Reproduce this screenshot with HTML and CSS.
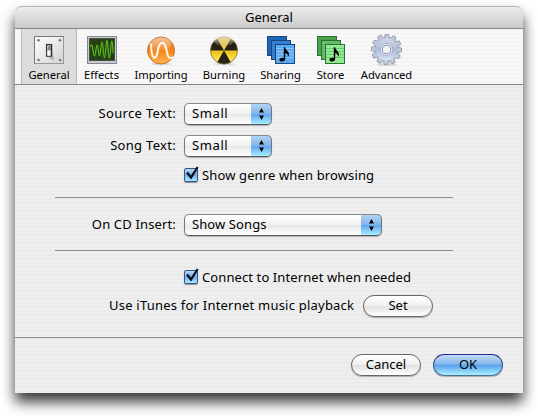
FILE: index.html
```
<!DOCTYPE html>
<html lang="en">
<head>
<meta charset="utf-8">
<title>General</title>
<link rel="stylesheet" href="styles.css">
</head>
<body>
<svg width="0" height="0" class="defs">
  <defs>
    <linearGradient id="plate" x1="0" y1="0" x2="1" y2="1"><stop offset="0" stop-color="#fff"/><stop offset="1" stop-color="#d2d2d2"/></linearGradient>
    <linearGradient id="orange" x1="0" y1="0" x2="0" y2="1"><stop offset="0" stop-color="#e87a20"/><stop offset=".5" stop-color="#f5861c"/><stop offset="1" stop-color="#ffb550"/></linearGradient>
    <linearGradient id="yellow" x1="0" y1="0" x2="0" y2="1"><stop offset="0" stop-color="#c99a10"/><stop offset=".4" stop-color="#f0d24e"/><stop offset=".55" stop-color="#ecc51a"/><stop offset="1" stop-color="#fff27c"/></linearGradient>
    <linearGradient id="gloss" x1="0" y1="0" x2="0" y2="1"><stop offset="0" stop-color="#fff" stop-opacity=".85"/><stop offset="1" stop-color="#fff" stop-opacity=".1"/></linearGradient>
    <linearGradient id="steel" x1="0" y1="0" x2="0" y2="1"><stop offset="0" stop-color="#d3dae7"/><stop offset=".5" stop-color="#adb9d8"/><stop offset="1" stop-color="#dae3f3"/></linearGradient>
    <path id="note" d="M18.800 24V13.200h1.300c.2 2.700 4 4.200 3.900 7.100 0 1.200-.6 2.200-1.300 3 .7-2.500-.4-3.500-2.500-4.200V24.800c0 1.700-1.500 2.700-3.200 2.700-1.500 0-2.600-.7-2.600-1.800 0-1.600 2.300-2.600 4.400-1.700z"/>
    <path id="tooth" d="M-2.600-11L-1.500-15h3L2.600-11z"/>
    <g id="teeth">
      <use href="#tooth"/><use href="#tooth" transform="rotate(30)"/><use href="#tooth" transform="rotate(60)"/><use href="#tooth" transform="rotate(90)"/>
      <use href="#tooth" transform="rotate(120)"/><use href="#tooth" transform="rotate(150)"/><use href="#tooth" transform="rotate(180)"/><use href="#tooth" transform="rotate(210)"/>
      <use href="#tooth" transform="rotate(240)"/><use href="#tooth" transform="rotate(270)"/><use href="#tooth" transform="rotate(300)"/><use href="#tooth" transform="rotate(330)"/>
    </g>
  </defs>
</svg>
<main class="window">
  <header class="titlebar"><h1 class="title">General</h1></header>
  <nav class="toolbar">
    <a class="tool tool-general selected">
      <svg class="icon" width="32" height="32" viewBox="0 0 32 32">
        <rect x="1.500" y="2.500" width="29" height="27" fill="url(#plate)" stroke="#777"/>
        <path d="M2 29.500h28.500V3" fill="none" stroke="#999"/>
        <g fill="#777"><circle cx="5.500" cy="6.200" r="1.300"/><circle cx="27" cy="6.200" r="1.300"/><circle cx="5.500" cy="26" r="1.300"/><circle cx="27" cy="26" r="1.300"/></g>
        <path d="M14 22l6 5 1-4-2-3z" fill="#999" opacity=".6"/>
        <rect x="13.600" y="10.600" width="5" height="11.500" fill="#eee" stroke="#333" stroke-width="1.300"/>
        <path d="M14.500 16.500l1-5h2.500v5z" fill="#888"/>
        <rect x="14" y="16" width="3.500" height="6" rx="1" fill="#fff" stroke="#777" stroke-width=".5"/>
      </svg>
      <span class="label">General</span>
    </a>
    <a class="tool tool-effects">
      <svg class="icon" width="32" height="32" viewBox="0 0 32 32">
        <rect x="1.500" y="2.500" width="29" height="27" fill="#c9cbd0" stroke="#878991"/>
        <rect x="3.500" y="4.500" width="25" height="22" fill="#263f14" stroke="#455341"/>
        <path d="M4 15.500h24M10 5v21M16 5v21M22 5v21" stroke="#40572b" stroke-width=".5"/>
        <path d="M4.500 13c.7-3 1.500-3 2 0 .8 5 1 9 2 9 1.200 0 1.500-11 2.700-11 1.200 0 1.100 11 2.300 11s1.300-14 2.500-14 1.300 16 2.500 16 1.300-18 2.400-18 1.200 18 2.400 18 1.500-17 2.500-17c1.100 0 .8 9 1.500 12" fill="none" stroke="#58bf18" stroke-width="1.200"/>
      </svg>
      <span class="label">Effects</span>
    </a>
    <a class="tool tool-importing">
      <svg class="icon" width="32" height="32" viewBox="0 0 32 32">
        <ellipse cx="16" cy="30" rx="11" ry="1.200" fill="#000" opacity=".13"/>
        <circle cx="16" cy="16.500" r="13.500" fill="url(#orange)" stroke="#ce6f2b"/>
        <ellipse cx="16" cy="10" rx="10.500" ry="6.500" fill="url(#gloss)" opacity=".65"/>
        <path d="M6 9.500c.2 8 1.200 14.300 3.700 14.300 3.800 0 2-15 7.600-15s3.200 15.300 8 15.300c1.300 0 2.200-.6 2.700-1.300" fill="none" stroke="#ffe6b8" stroke-width="2.700" opacity=".5"/>
        <path d="M6 9.500c.2 8 1.200 14.300 3.700 14.300 3.800 0 2-15 7.600-15s3.200 15.300 8 15.300c1.300 0 2.200-.6 2.700-1.300" fill="none" stroke="#fff" stroke-width="1.500"/>
      </svg>
      <span class="label">Importing</span>
    </a>
    <a class="tool tool-burning">
      <svg class="icon" width="32" height="32" viewBox="0 0 32 32">
        <ellipse cx="16" cy="30" rx="11" ry="1.200" fill="#000" opacity=".13"/>
        <circle cx="16" cy="16.500" r="13.500" fill="url(#yellow)"/>
        <path d="M16 16.500H2.500A13.500 13.500 0 0 1 9.250 4.810zM16 16.500L22.750 4.810A13.500 13.500 0 0 1 29.500 16.500zM16 16.500l6.750 11.690a13.500 13.500 0 0 1-13.500 0z" fill="#242116"/>
        <circle cx="16" cy="16.500" r="13.500" fill="none" stroke="#816d2d" stroke-width=".8"/>
        <ellipse cx="16" cy="7.500" rx="9.500" ry="4.500" fill="url(#gloss)" opacity=".75"/>
      </svg>
      <span class="label">Burning</span>
    </a>
    <a class="tool tool-sharing">
      <svg class="icon" width="32" height="32" viewBox="0 0 32 32">
        <g stroke="#1b4778"><rect x="2.500" y="2.500" width="19" height="19" fill="#1e66bb"/><rect x="6.500" y="6.500" width="19" height="19" fill="#347fd1"/><rect x="10.500" y="10.500" width="19" height="19" fill="#5ca9f4"/></g>
        <path d="M11 14.500h18M11 17.500h18M11 20.500h18M11 23.500h18" stroke="#8bc4fb"/>
        <use href="#note"/>
      </svg>
      <span class="label">Sharing</span>
    </a>
    <a class="tool tool-store">
      <svg class="icon" width="32" height="32" viewBox="0 0 32 32">
        <g stroke="#2b7135"><rect x="2.500" y="2.500" width="19" height="19" fill="#4ba34e"/><rect x="6.500" y="6.500" width="19" height="19" fill="#65bd68"/><rect x="10.500" y="10.500" width="19" height="19" fill="#94ea91"/></g>
        <path d="M11 14.500h18M11 17.500h18M11 20.500h18M11 23.500h18" stroke="#6cc976"/>
        <use href="#note"/>
      </svg>
      <span class="label">Store</span>
    </a>
    <a class="tool tool-advanced">
      <svg class="icon" width="32" height="32" viewBox="0 0 32 32">
        <ellipse cx="16" cy="30.500" rx="10" ry="1.300" fill="#000" opacity=".14"/>
        <g transform="translate(15.500 15.500) rotate(2)">
          <use href="#teeth" fill="#b4bdcf" stroke="#7c8598" stroke-width="1.100"/>
          <circle r="11.600" fill="url(#steel)" stroke="#7f899e" stroke-width=".8"/>
          <use href="#teeth" fill="#bfc8da"/>
          <circle r="11.200" fill="url(#steel)"/>
        </g>
        <circle cx="15.500" cy="15.500" r="6" fill="#eef1f7" stroke="#98a6c6" stroke-width=".8"/>
        <circle cx="15.500" cy="15.500" r="4.200" fill="#f5f5f5" stroke="#818ca4"/>
      </svg>
      <span class="label">Advanced</span>
    </a>
  </nav>
  <section class="content">
    <div class="row source"><span class="caption c-source">Source Text:</span><span class="popup short"><span class="value">Small</span><span class="cap"><svg width="5" height="13" viewBox="0 0 5 13"><path d="M2.500 0L5 4.500H0zM2.500 12L0 7.500h5z"/></svg></span></span></div>
    <div class="row song"><span class="caption c-song">Song Text:</span><span class="popup short"><span class="value">Small</span><span class="cap"><svg width="5" height="13" viewBox="0 0 5 13"><path d="M2.500 0L5 4.500H0zM2.500 12L0 7.500h5z"/></svg></span></span></div>
    <div class="row check-row"><span class="box"><svg class="tick" width="17" height="17" viewBox="0 0 17 17"><path d="M3 6.500l4 5L13.700 1" fill="none" stroke="#080d16" stroke-width="2.200"/></svg></span><span class="t-genre">Show genre when browsing</span></div>
    <hr class="rule">
    <div class="row insert"><span class="caption c-insert">On CD Insert:</span><span class="popup long"><span class="value songs">Show Songs</span><span class="cap"><svg width="5" height="13" viewBox="0 0 5 13"><path d="M2.500 0L5 4.500H0zM2.500 12L0 7.500h5z"/></svg></span></span></div>
    <hr class="rule">
    <div class="row check-row connect"><span class="box"><svg class="tick" width="17" height="17" viewBox="0 0 17 17"><path d="M3 6.500l4 5L13.700 1" fill="none" stroke="#080d16" stroke-width="2.200"/></svg></span><span class="t-connect">Connect to Internet when needed</span></div>
    <div class="row playback"><span class="t-playback">Use iTunes for Internet music playback</span><button class="button">Set</button></div>
  </section>
  <footer class="footer"><button class="button">Cancel</button><button class="button primary">OK</button></footer>
</main>
</body>
</html>
```
FILE: styles.css
```
* { box-sizing: border-box; }
body {
  margin: 0;
  padding: 6px 15px 0;
  height: 416px;
  overflow: hidden;
  background: #fff;
  color: #000;
  font: 13px/20px "Noto Sans", "Open Sans", sans-serif;
  white-space: nowrap;
}
.defs { position: absolute; }
.window {
  width: 508px;
  height: 387px;
  display: flex;
  flex-direction: column;
  border-radius: 7px 7px 0 0;
  background: repeating-linear-gradient(#ebebeb 0 2px, #efefef 2px 4px);
  box-shadow: 0 9px 14px rgba(0, 0, 0, .78);
}
.titlebar {
  height: 23px;
  border-top: 1px solid #b5b5b5;
  border-bottom: 1px solid #858585;
  border-radius: 7px 7px 0 0;
  background: linear-gradient(#ededed, #c9c9c9);
  text-align: center;
}
.title { margin: 0; font-size: 13px; font-weight: 400; line-height: 21px; }
.toolbar {
  height: 56px;
  display: flex;
  padding-left: 6px;
  border-bottom: 1px solid #858585;
  background: repeating-linear-gradient(#f4f4f4 0 2px, #f8f8f8 2px 4px);
}
.tool { display: flex; flex-direction: column; align-items: center; padding-top: 5px; font-size: 11.2px; }
.icon { display: block; flex: none; }
.label { line-height: 17px; }
.tool-general { width: 56px; border: solid #b7b7b7; border-width: 0 1px; background: #dcdcdc; }
.tool-effects { width: 49px; }
.tool-importing { width: 70px; }
.tool-burning { width: 56px; }
.tool-sharing { width: 57px; }
.tool-store { width: 43px; }
.tool-advanced { width: 69px; }
.content { height: 252px; padding: 18px 0 0 40px; }
.row { display: flex; align-items: center; height: 22px; }
.song { margin-top: 10px; }
.caption { width: 121px; height: 22px; text-align: right; margin-right: 8px; }
.c-source { letter-spacing: .33px; }
.c-song { letter-spacing: .3px; }
.c-insert { letter-spacing: .15px; }
.t-genre { letter-spacing: .13px; }
.t-connect { letter-spacing: .1px; }
.popup {
  display: flex;
  height: 22px;
  border: 1px solid #777;
  border-color: #888 #777 #555;
  border-radius: 5px;
  overflow: hidden;
  background: linear-gradient(#fff, #f1f1f1 48%, #e8e8e8 52%, #fff);
  box-shadow: 0 1px 1px rgba(0, 0, 0, .25);
}
.short { width: 88px; }
.long { width: 198px; }
.value { flex: 1; padding-left: 7px; line-height: 18px; letter-spacing: .6px; }
.songs { letter-spacing: .1px; }
.cap {
  width: 21px;
  display: flex;
  align-items: center;
  justify-content: center;
  margin: -1px -1px -1px 0;
  border: 1px solid #174294;
  border-color: #191970 #1d3a9c #355f92;
  border-left: 0;
  border-radius: 0 5px 5px 0;
  background: linear-gradient(#b5d2f2, #82b5eb 48%, #61a6f0 52%, #a8eeff);
}
.check-row { height: 20px; margin: 8px 0 0 129px; }
.box {
  position: relative;
  width: 14px;
  height: 14px;
  margin-right: 4px;
  border: 1px solid #36558e;
  border-radius: 2px;
  background: linear-gradient(#b6d6f6, #72aef0 50%, #a9eaff);
  box-shadow: 0 1px 1px rgba(0, 0, 0, .4);
}
.tick { position: absolute; left: -1px; top: -3px; }
.rule { width: 398px; height: 1px; margin: 12px 0 0; border: 0; background: #898989; }
.insert { margin: 16px 0 14px; }
.connect { margin-top: 16px; }
.playback { margin: 8px 0 0 54px; }
.t-playback { width: 254px; height: 22px; letter-spacing: .22px; }
.button {
  width: 70px;
  height: 22px;
  padding: 0 0 2px;
  border: 1px solid #666;
  border-radius: 11px;
  background: linear-gradient(#fff, #f0f0f0 48%, #e2e2e2 52%, #fff);
  box-shadow: 0 1px 1px rgba(0, 0, 0, .28);
  color: #000;
  font: inherit;
  line-height: 18px;
}
.primary {
  border-color: #29299a #355990 #4c6d93;
  background: linear-gradient(#c2daf5, #86b6ec 45%, #5da2ed 52%, #a6f1ff);
}
.footer {
  flex: 1;
  display: flex;
  justify-content: flex-end;
  gap: 12px;
  padding: 16px 20px 0 0;
  border-top: 1px solid #898989;
}
```
